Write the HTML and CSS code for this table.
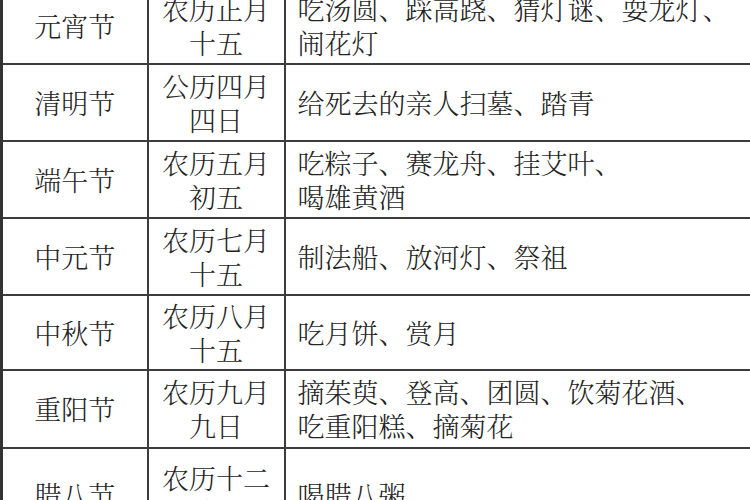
FILE: index.html
```html
<!DOCTYPE html>
<html lang="zh-CN">
<head>
<meta charset="utf-8">
<title>传统节日</title>
<link rel="stylesheet" href="styles.css">
</head>
<body>
<table class="festivals">
  <colgroup>
    <col class="c-name">
    <col class="c-date">
    <col class="c-custom">
  </colgroup>
  <tbody>
    <tr class="row">
      <td class="name">元宵节</td>
      <td class="date">农历正月<br>十五</td>
      <td class="custom">吃汤圆、踩高跷、猜灯谜、耍龙灯、<br>闹花灯</td>
    </tr>
    <tr class="row">
      <td class="name">清明节</td>
      <td class="date">公历四月<br>四日</td>
      <td class="custom">给死去的亲人扫墓、踏青</td>
    </tr>
    <tr class="row">
      <td class="name">端午节</td>
      <td class="date">农历五月<br>初五</td>
      <td class="custom">吃粽子、赛龙舟、挂艾叶、<br>喝雄黄酒</td>
    </tr>
    <tr class="row">
      <td class="name">中元节</td>
      <td class="date">农历七月<br>十五</td>
      <td class="custom">制法船、放河灯、祭祖</td>
    </tr>
    <tr class="row row-short">
      <td class="name">中秋节</td>
      <td class="date">农历八月<br>十五</td>
      <td class="custom">吃月饼、赏月</td>
    </tr>
    <tr class="row row-tall">
      <td class="name">重阳节</td>
      <td class="date">农历九月<br>九日</td>
      <td class="custom">摘茱萸、登高、团圆、饮菊花酒、<br>吃重阳糕、摘菊花</td>
    </tr>
    <tr class="row row-last">
      <td class="name">腊八节</td>
      <td class="date">农历十二<br>月初八</td>
      <td class="custom">喝腊八粥</td>
    </tr>
  </tbody>
</table>
</body>
</html>
```
FILE: styles.css
```css
html, body {
  margin: 0;
  padding: 0;
  background: #ffffff;
  overflow: hidden;
}

body {
  width: 750px;
  height: 500px;
  font-family: "Noto Serif CJK SC", "Liberation Serif", "Noto Sans CJK SC", serif;
  font-weight: 300;
  color: #242424;
}

.festivals {
  border-collapse: collapse;
  width: 800px;
  margin-top: -14px;
  table-layout: fixed;
  font-size: 27px;
  line-height: 34px;
}

.c-name { width: 146px; }
.c-date { width: 137px; }
.c-custom { width: 517px; }

.festivals td {
  border: 2px solid #3c3c3c;
  padding: 0;
  height: 75px;
  vertical-align: middle;
}

.festivals td.name {
  border-left: 3px solid #333333;
  text-align: center;
}

.festivals td.date {
  text-align: center;
}

.festivals td.custom {
  text-align: left;
  padding-left: 12px;
}

.row-short td {
  height: 73px;
}

.row-tall td {
  height: 76px;
}

.row-last td {
  height: 92px;
}
```
